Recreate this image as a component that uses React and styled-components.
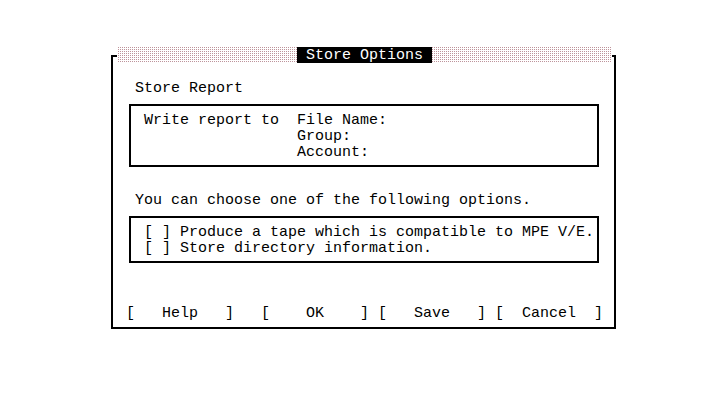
import React from 'react'
import styled, { createGlobalStyle } from 'styled-components'

const Global = createGlobalStyle`
  html, body {
    margin: 0;
    background: #fff;
  }
  body {
    font-family: "Liberation Mono", "DejaVu Sans Mono", monospace;
    font-size: 15px;
    line-height: 20px;
    color: #000;
  }
`

const Screen = styled.div`
  width: 720px;
  height: 400px;
  padding-top: 55px;
  box-sizing: border-box;
  overflow: hidden;
`

const Frame = styled.div`
  margin-left: 111px;
  width: 505px;
  box-sizing: border-box;
  border: 2px solid #000;
  display: flex;
  flex-direction: column;
`

const TitleBar = styled.div`
  margin: -10px 2px 0 4px;
  height: 16px;
  display: flex;
  justify-content: center;
  background-color: #fff;
  background-image: conic-gradient(#be949b 0 25%, transparent 0);
  background-size: 2px 2px;
`

const Title = styled.div`
  width: 135px;
  height: 16px;
  line-height: 17px;
  background: #000;
  color: #fff;
  text-align: center;
  white-space: pre;
`

const Body = styled.div`
  padding: 16px 15px 7px 13px;
  display: flex;
  flex-direction: column;
`

const Line = styled.div`
  height: 16px;
  padding-left: ${p => p.$indent || 0}px;
  white-space: pre;
`

const Box = styled.div`
  margin: ${p => p.$top}px 0 ${p => p.$bottom}px 3px;
  border: 2px solid #000;
  padding: 5px 0 6px 13px;
`

const Fields = styled.div`
  display: grid;
  grid-template-columns: 153px 1fr;
  grid-auto-rows: 16px;
`

const ButtonRow = styled.div`
  display: flex;
  height: 16px;
`

const Button = styled.div`
  flex: 0 0 108px;
  margin-right: ${p => p.$gap}px;
  display: flex;
  justify-content: space-between;
  white-space: pre;

  & > span.label {
    flex: 1;
    text-align: center;
  }
`

const buttons = [
  { label: 'Help', gap: 27 },
  { label: 'OK', gap: 9 },
  { label: 'Save', gap: 9 },
  { label: 'Cancel', gap: 0 },
]

export default function App() {
  return (
    <>
      <Global />
      <Screen>
        <Frame>
          <TitleBar>
            <Title> Store Options </Title>
          </TitleBar>
          <Body>
            <Line $indent={9}>Store Report</Line>
            <Box $top={9} $bottom={24}>
              <Fields>
                <div>Write report to</div>
                <div>File Name:</div>
                <div />
                <div>Group:</div>
                <div />
                <div>Account:</div>
              </Fields>
            </Box>
            <Line $indent={9}>You can choose one of the following options.</Line>
            <Box $top={9} $bottom={41}>
              <Line>[ ] Produce a tape which is compatible to MPE V/E.</Line>
              <Line>[ ] Store directory information.</Line>
            </Box>
            <ButtonRow>
              {buttons.map(b => (
                <Button key={b.label} $gap={b.gap}>
                  <span>[</span>
                  <span className="label">{b.label}</span>
                  <span>]</span>
                </Button>
              ))}
            </ButtonRow>
          </Body>
        </Frame>
      </Screen>
    </>
  )
}
